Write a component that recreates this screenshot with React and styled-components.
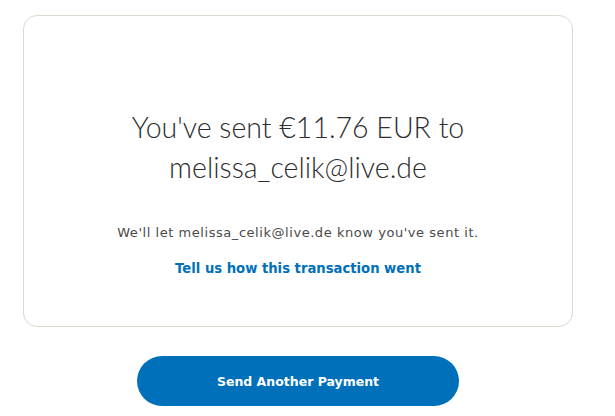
import styled, { createGlobalStyle } from "styled-components";

const GlobalStyle = createGlobalStyle`
  body {
    margin: 0;
    background: #fff;
    font-family: "DejaVu Sans", sans-serif;
  }
`;

const Page = styled.div`
  width: 550px;
  padding: 15px 0 0 23px;
  display: flex;
  flex-direction: column;
  align-items: center;
`;

const Card = styled.div`
  box-sizing: border-box;
  width: 100%;
  height: 312px;
  border: 1px solid #dcd9d0;
  border-radius: 14px;
  padding: 91px 30px 0;
  display: flex;
  flex-direction: column;
  align-items: center;
  text-align: center;
`;

const Heading = styled.h1`
  margin: 0;
  font-family: Lato, "Open Sans", sans-serif;
  font-weight: 300;
  font-size: 28.5px;
  line-height: 40px;
  color: #2c2e2f;
`;

const Note = styled.p`
  margin: 38px 0 0;
  font-size: 13px;
  letter-spacing: 0.55px;
  color: #4a4a4a;
`;

const FeedbackLink = styled.a`
  margin-top: 21px;
  font-size: 13.2px;
  font-weight: bold;
  color: #0070ba;
  text-decoration: none;
  cursor: pointer;
`;

const PrimaryButton = styled.button`
  margin-top: 29px;
  width: 322px;
  height: 50px;
  border: none;
  border-radius: 25px;
  background: #0070ba;
  color: #fff;
  font-family: "DejaVu Sans", sans-serif;
  font-size: 12.5px;
  font-weight: bold;
  cursor: pointer;
`;

export default function App() {
  return (
    <>
      <GlobalStyle />
      <Page>
        <Card>
          <Heading>
            You've sent €11.76 EUR to
            <br />
            melissa_celik@live.de
          </Heading>
          <Note>We'll let melissa_celik@live.de know you've sent it.</Note>
          <FeedbackLink>Tell us how this transaction went</FeedbackLink>
        </Card>
        <PrimaryButton>Send Another Payment</PrimaryButton>
      </Page>
    </>
  );
}
